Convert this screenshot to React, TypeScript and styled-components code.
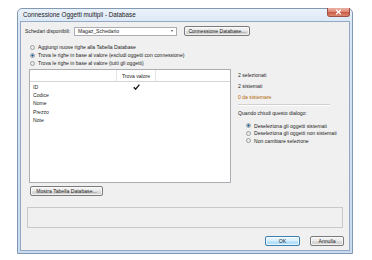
import React from "react";
import styled, { createGlobalStyle } from "styled-components";

const Global = createGlobalStyle`
  html, body { margin: 0; padding: 0; background: #ffffff; }
  body { font-family: "Liberation Sans", Arial, sans-serif; font-size: 5.1px; color: #1c1c1c; }
`;

const Page = styled.div`
  width: 372px;
  height: 260px;
  padding: 8px 0 0 17px;
  box-sizing: border-box;
`;

const Window = styled.div`
  width: 336px;
  height: 246px;
  box-sizing: border-box;
  border: 1px solid #8299b3;
  border-radius: 5px 5px 0 0;
  background: linear-gradient(180deg, #eaf2fb 0%, #d9e6f5 6%, #c9dbef 100%);
  padding: 0 2px 2px 2px;
  display: flex;
  flex-direction: column;
`;

const TitleBar = styled.div`
  height: 12px;
  display: flex;
  align-items: flex-start;
`;

const Title = styled.div`
  font-size: 6.3px;
  color: #222;
  padding: 2px 0 0 3px;
  line-height: 8px;
  white-space: nowrap;
`;

const CloseBtn = styled.div`
  margin-left: auto;
  margin-top: -1px;
  width: 23px;
  height: 9px;
  box-sizing: border-box;
  border: 1px solid #9b5048;
  border-top: none;
  border-radius: 0 0 3px 3px;
  background: linear-gradient(180deg, #eab2a5 0%, #df8a78 45%, #cc5a45 55%, #dc8a72 100%);
  display: flex;
  align-items: center;
  justify-content: center;
`;

const Client = styled.div`
  flex: 1;
  border: 1px solid #93a9c3;
  background: #f0f0f0;
  display: flex;
  flex-direction: column;
  position: relative;
`;

const TopRow = styled.div`
  margin-top: 4px;
  height: 10px;
  display: flex;
  align-items: center;
  padding-left: 4px;
`;

const Label = styled.div`
  width: 49px;
  white-space: nowrap;
`;

const Select = styled.div`
  width: 103px;
  height: 9px;
  box-sizing: border-box;
  border: 1px solid #abadb3;
  background: #fff;
  display: flex;
  align-items: center;
  padding-left: 3px;
  white-space: nowrap;
`;

const Arrow = styled.span`
  margin-left: auto;
  margin-right: 3px;
  width: 0;
  height: 0;
  border-left: 1.5px solid transparent;
  border-right: 1.5px solid transparent;
  border-top: 2px solid #555;
`;

const Button = styled.div<{ $w: number; $default?: boolean }>`
  width: ${(p) => p.$w}px;
  height: 10px;
  box-sizing: border-box;
  border: 1px solid ${(p) => (p.$default ? "#3c7fb1" : "#7a7a7a")};
  border-radius: 2px;
  background: ${(p) =>
    p.$default
      ? "linear-gradient(180deg, #eaf6fd 0%, #d9f0fc 50%, #bee6fd 51%, #a7d9f5 100%)"
      : "linear-gradient(180deg, #f2f2f2 0%, #ebebeb 50%, #dddddd 51%, #cfcfcf 100%)"};
  display: flex;
  align-items: center;
  justify-content: center;
  white-space: nowrap;
  box-shadow: inset 0 0 0 1px rgba(255, 255, 255, 0.7);
`;

const RadioGroup = styled.div<{ $ml: number; $mt: number }>`
  display: flex;
  flex-direction: column;
  margin-left: ${(p) => p.$ml}px;
  margin-top: ${(p) => p.$mt}px;
`;

const RadioRow = styled.div<{ $h: number }>`
  height: ${(p) => p.$h}px;
  display: flex;
  align-items: center;
  gap: 3px;
  white-space: nowrap;
`;

const RadioDot = styled.span<{ $on?: boolean }>`
  width: 5px;
  height: 5px;
  box-sizing: border-box;
  border-radius: 50%;
  border: 1px solid #9a9b9b;
  background: ${(p) =>
    p.$on
      ? "radial-gradient(circle, #1c5180 0%, #2a78c0 45%, #e9eaea 55%)"
      : "radial-gradient(circle, #e6e6e6 0%, #f6f6f6 100%)"};
  flex-shrink: 0;
`;

const Main = styled.div`
  margin-top: 2px;
  margin-left: 8px;
  display: flex;
  gap: 7px;
`;

const ListView = styled.div`
  width: 202px;
  height: 114px;
  box-sizing: border-box;
  border: 1px solid #abadb3;
  background: #fff;
  display: flex;
  flex-direction: column;
`;

const Header = styled.div`
  height: 11px;
  display: grid;
  grid-template-columns: 87px 39px 1fr;
  border-bottom: 1px solid #d5d5d5;
`;

const HeaderCell = styled.div`
  border-right: 1px solid #e5e5e5;
  display: flex;
  align-items: center;
  justify-content: center;
  white-space: nowrap;
  &:last-child { border-right: none; }
`;

const Rows = styled.div`
  padding-top: 1px;
  display: flex;
  flex-direction: column;
`;

const Row = styled.div`
  height: 8.2px;
  display: grid;
  grid-template-columns: 87px 39px 1fr;
  align-items: center;
`;

const Cell = styled.div`
  padding-left: 3px;
  white-space: nowrap;
`;

const CheckCell = styled.div`
  display: flex;
  justify-content: center;
`;

const Side = styled.div`
  width: 93px;
  display: flex;
  flex-direction: column;
`;

const Stat = styled.div<{ $c?: string }>`
  height: 11px;
  display: flex;
  align-items: center;
  color: ${(p) => p.$c || "#1c1c1c"};
  white-space: nowrap;
`;

const Sep = styled.div`
  margin-top: 2px;
  width: 92px;
  height: 1px;
  background: #d0d0d0;
  border-bottom: 1px solid #fff;
`;

const Caption = styled.div`
  margin-top: 4px;
  line-height: 7px;
  white-space: nowrap;
`;

const BtnRow = styled.div<{ $mt: number; $ml: number }>`
  margin-top: ${(p) => p.$mt}px;
  margin-left: ${(p) => p.$ml}px;
  display: flex;
`;

const StatusPanel = styled.div`
  margin-top: 11px;
  margin-left: 6px;
  width: 316px;
  height: 21px;
  box-sizing: border-box;
  border: 1px solid #c9c9c9;
  background: #f0f0f0;
`;

const Footer = styled.div`
  margin-top: 8px;
  margin-right: 5px;
  display: flex;
  justify-content: flex-end;
  gap: 10px;
`;

const Grip = styled.div`
  position: absolute;
  right: 1px;
  bottom: 1px;
  width: 5px;
  height: 5px;
  background:
    radial-gradient(circle, #b8b8b8 0.6px, transparent 0.7px) 0 0 / 2px 2px;
  clip-path: polygon(100% 0, 100% 100%, 0 100%);
`;

export default function App() {
  return (
    <Page>
      <Global />
      <Window>
        <TitleBar>
          <Title>Connessione Oggetti multipli - Database</Title>
          <CloseBtn>
            <svg width="7" height="6" viewBox="0 0 7 6">
              <path d="M1.2 0.8 L5.8 5.2 M5.8 0.8 L1.2 5.2" stroke="#fff" strokeWidth="1.3" />
            </svg>
          </CloseBtn>
        </TitleBar>
        <Client>
          <TopRow>
            <Label>Schedari disponibili:</Label>
            <Select>
              Magaz_Schedario
              <Arrow />
            </Select>
            <BtnRow $mt={0} $ml={7}>
              <Button $w={66}>Connessione Database...</Button>
            </BtnRow>
          </TopRow>
          <RadioGroup $ml={9} $mt={7}>
            <RadioRow $h={8}>
              <RadioDot />
              Aggiungi nuove righe alla Tabella Database
            </RadioRow>
            <RadioRow $h={8}>
              <RadioDot $on />
              Trova le righe in base al valore (escludi oggetti con connessione)
            </RadioRow>
            <RadioRow $h={8}>
              <RadioDot />
              Trova le righe in base al valore (tutti gli oggetti)
            </RadioRow>
          </RadioGroup>
          <Main>
            <ListView>
              <Header>
                <HeaderCell />
                <HeaderCell>Trova valore</HeaderCell>
                <HeaderCell />
              </Header>
              <Rows>
                {["ID", "Codice", "Nome", "Prezzo", "Note"].map((n, i) => (
                  <Row key={n}>
                    <Cell>{n}</Cell>
                    <CheckCell>
                      {i === 0 && (
                        <svg width="7" height="6" viewBox="0 0 7 6">
                          <path d="M0.8 3.2 L2.6 5.2 L6.4 0.6" stroke="#111" strokeWidth="1.3" fill="none" />
                        </svg>
                      )}
                    </CheckCell>
                    <Cell />
                  </Row>
                ))}
              </Rows>
            </ListView>
            <Side>
              <Stat>2 selezionati</Stat>
              <Stat>2 sistemati</Stat>
              <Stat $c="#b06400">0 da sistemare</Stat>
              <Sep />
              <Caption>Quando chiudi questo dialogo:</Caption>
              <RadioGroup $ml={8} $mt={5}>
                <RadioRow $h={7.5}>
                  <RadioDot $on />
                  Deseleziona gli oggetti sistemati
                </RadioRow>
                <RadioRow $h={7.5}>
                  <RadioDot />
                  Deseleziona gli oggetti non sistemati
                </RadioRow>
                <RadioRow $h={7.5}>
                  <RadioDot />
                  Non cambiare selezione
                </RadioRow>
              </RadioGroup>
            </Side>
          </Main>
          <BtnRow $mt={3} $ml={9}>
            <Button $w={73}>Mostra Tabella Database...</Button>
          </BtnRow>
          <StatusPanel />
          <Footer>
            <Button $w={35} $default>OK</Button>
            <Button $w={34}>Annulla</Button>
          </Footer>
          <Grip />
        </Client>
      </Window>
    </Page>
  );
}
